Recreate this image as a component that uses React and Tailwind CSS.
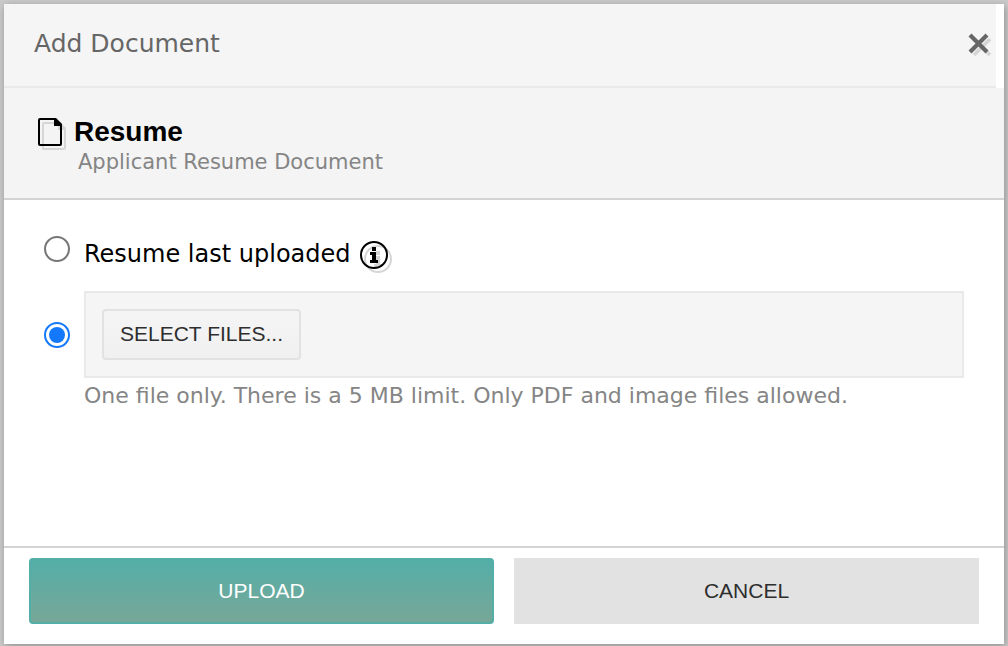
import { useState } from "react";

function CloseIcon() {
  return (
    <svg width="24" height="26" viewBox="0 0 24 26" fill="none" aria-hidden="true">
      <path d="M6 24 22 8M6 8l16 16" stroke="#d6d6d6" strokeWidth="3.8" />
      <path d="M2 4l17 17M19 4 2 21" stroke="#666" strokeWidth="4.2" />
    </svg>
  );
}

function DocumentIcon() {
  return (
    <svg width="28" height="32" viewBox="0 0 28 32" fill="none" aria-hidden="true">
      <path
        d="M6 5h15l6 6v19a1 1 0 0 1-1 1H6a1 1 0 0 1-1-1V6a1 1 0 0 1 1-1z"
        stroke="#d6d6d6"
        strokeWidth="2"
      />
      <path d="M20 4h2l6 6v2h-8z" fill="#d6d6d6" />
      <path
        d="M2 1h15l6 6v19a1 1 0 0 1-1 1H2a1 1 0 0 1-1-1V2a1 1 0 0 1 1-1z"
        stroke="#000"
        strokeWidth="2"
      />
      <path d="M16 0h2l6 6v2h-8z" fill="#000" />
    </svg>
  );
}

function InfoIcon() {
  return (
    <svg width="32" height="34" viewBox="0 0 32 34" fill="none" aria-hidden="true">
      <circle cx="18" cy="19" r="13" stroke="#d6d6d6" strokeWidth="2" />
      <path d="M16 11h4v4h-4zM14 16h6v8h2v3h-8v-3h2v-5h-2z" fill="#d6d6d6" />
      <circle cx="14" cy="15" r="13" stroke="#000" strokeWidth="2" />
      <path d="M12 7h4v4h-4zM10 12h6v8h2v3h-8v-3h2v-5h-2z" fill="#000" />
    </svg>
  );
}

const radioClass =
  "grid size-[26px] shrink-0 appearance-none place-items-center rounded-full border-2 border-[#767676] bg-white before:size-4 before:rounded-full checked:border-[#1478fa] checked:before:bg-[#1478fa]";

function App() {
  const [source, setSource] = useState("new");

  return (
    <div className="flex min-h-screen bg-[#cbcbcb] px-1 pt-1 pb-0.5 font-['DejaVu_Sans',Verdana,sans-serif]">
      <div
        role="dialog"
        aria-labelledby="title"
        className="flex flex-1 flex-col bg-white shadow-[1px_2px_8px_rgba(0,0,0,0.3)]"
      >
        <header className="mr-2 flex h-[84px] items-center justify-between border-b-2 border-[#e9e9e9] bg-[#f5f5f5] pr-1 pb-0.5 pl-[30px]">
          <h1 id="title" className="text-[25px] leading-8 text-[#666]">
            Add Document
          </h1>
          <button type="button" aria-label="Close">
            <CloseIcon />
          </button>
        </header>

        <section className="h-28 border-b-2 border-[#d3d3d3] bg-[#f4f4f4] pt-7 pl-[34px]">
          <div className="flex gap-2">
            <div className="pt-0.5">
              <DocumentIcon />
            </div>
            <div>
              <h2 className="font-['Liberation_Sans',Arial,sans-serif] text-[28px] leading-8 font-bold text-black">
                Resume
              </h2>
              <p className="pl-1 text-[21px] leading-7 text-[#858585]">
                Applicant Resume Document
              </p>
            </div>
          </div>
        </section>

        <main className="flex-1 px-10 pt-9">
          <div className="flex h-[55px] items-start gap-3.5">
            <input
              id="last"
              type="radio"
              name="source"
              className={radioClass}
              checked={source === "last"}
              onChange={() => setSource("last")}
            />
            <div className="flex items-start gap-[9px] pt-1">
              <label htmlFor="last" className="text-2xl leading-7 text-black">
                Resume last uploaded
              </label>
              <button type="button" aria-label="More information">
                <InfoIcon />
              </button>
            </div>
          </div>

          <div className="flex items-center gap-3.5">
            <input
              id="new"
              type="radio"
              name="source"
              aria-label="Select files"
              className={radioClass}
              checked={source === "new"}
              onChange={() => setSource("new")}
            />
            <div className="flex-1 border-2 border-[#e9e9e9] bg-[#f5f5f5] p-4">
              <button
                type="button"
                className="block h-[51px] rounded-sm border-2 border-[#e2e2e2] bg-linear-to-b from-[#f5f5f5] to-[#f0f0f0] px-4 pb-0.5 font-['Liberation_Sans',Arial,sans-serif] text-[21px] text-[#2e2e2e]"
              >
                SELECT FILES...
              </button>
            </div>
          </div>
          <p className="pt-1 pl-10 text-[22px] leading-7 text-[#858585]">
            One file only. There is a 5 MB limit. Only PDF and image files allowed.
          </p>
        </main>

        <footer className="grid grid-cols-2 gap-5 border-t-2 border-[#d3d3d3] px-[25px] pt-2.5 pb-5 font-['Liberation_Sans',Arial,sans-serif] text-[21px]">
          <button
            type="button"
            className="h-[66px] rounded-sm border-2 border-[#53aea8] bg-linear-to-b from-[#53aea8] to-[#76a797] text-white"
          >
            UPLOAD
          </button>
          <button type="button" className="h-[66px] bg-[#e2e2e2] text-[#2e2e2e]">
            CANCEL
          </button>
        </footer>
      </div>
    </div>
  );
}

export default App;
